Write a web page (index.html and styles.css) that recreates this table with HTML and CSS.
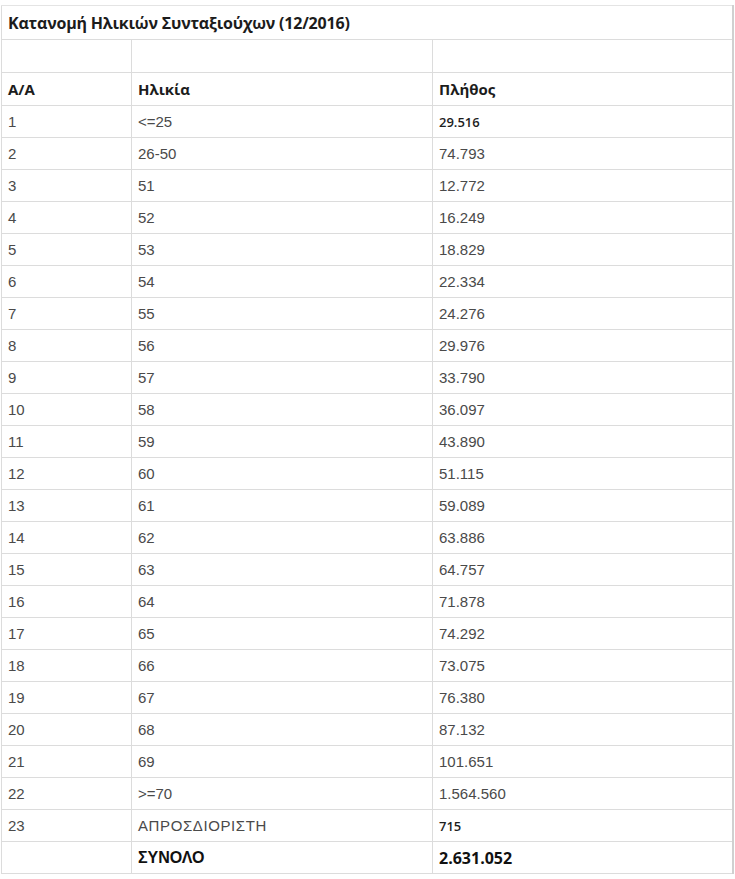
FILE: index.html
```html
<!DOCTYPE html>
<html lang="el">
<head>
<meta charset="utf-8">
<title>Κατανομή Ηλικιών Συνταξιούχων</title>
<link rel="stylesheet" href="styles.css">
</head>
<body>
<table class="grid">
  <colgroup><col class="c1"><col class="c2"><col class="c3"></colgroup>
  <tr class="title-row"><td colspan="3" class="title">Κατανομή Ηλικιών Συνταξιούχων (12/2016)</td></tr>
  <tr class="empty-row"><td></td><td></td><td></td></tr>
  <tr class="head-row"><td class="head">Α/Α</td><td class="head">Ηλικία</td><td class="head">Πλήθος</td></tr>
  <tr><td>1</td><td>&lt;=25</td><td class="cal">29.516</td></tr>
  <tr><td>2</td><td>26-50</td><td>74.793</td></tr>
  <tr><td>3</td><td>51</td><td>12.772</td></tr>
  <tr><td>4</td><td>52</td><td>16.249</td></tr>
  <tr><td>5</td><td>53</td><td>18.829</td></tr>
  <tr><td>6</td><td>54</td><td>22.334</td></tr>
  <tr><td>7</td><td>55</td><td>24.276</td></tr>
  <tr><td>8</td><td>56</td><td>29.976</td></tr>
  <tr><td>9</td><td>57</td><td>33.790</td></tr>
  <tr><td>10</td><td>58</td><td>36.097</td></tr>
  <tr><td>11</td><td>59</td><td>43.890</td></tr>
  <tr><td>12</td><td>60</td><td>51.115</td></tr>
  <tr><td>13</td><td>61</td><td>59.089</td></tr>
  <tr><td>14</td><td>62</td><td>63.886</td></tr>
  <tr><td>15</td><td>63</td><td>64.757</td></tr>
  <tr><td>16</td><td>64</td><td>71.878</td></tr>
  <tr><td>17</td><td>65</td><td>74.292</td></tr>
  <tr><td>18</td><td>66</td><td>73.075</td></tr>
  <tr><td>19</td><td>67</td><td>76.380</td></tr>
  <tr><td>20</td><td>68</td><td>87.132</td></tr>
  <tr><td>21</td><td>69</td><td>101.651</td></tr>
  <tr><td>22</td><td>&gt;=70</td><td>1.564.560</td></tr>
  <tr><td>23</td><td class="wide">ΑΠΡΟΣΔΙΟΡΙΣΤΗ</td><td class="cal">715</td></tr>
  <tr><td></td><td class="total-label">ΣΥΝΟΛΟ</td><td class="total-value">2.631.052</td></tr>
</table>
</body>
</html>
```
FILE: styles.css
```css
html, body {
  margin: 0;
  background: #ffffff;
}
body {
  padding: 5px 0 0 1px;
}
.grid {
  border-collapse: collapse;
  width: 731px;
  table-layout: fixed;
  font-family: "Liberation Sans", Arial, sans-serif;
  font-size: 15px;
  color: #4a4a4a;
  border-right: 2px solid #d0d0d0;
}
.c1 { width: 130px; }
.c2 { width: 301px; }
.c3 { width: 300px; }
.grid td {
  border: 1px solid #dcdcdc;
  height: 32px;
  padding: 0 6px;
  box-sizing: border-box;
  vertical-align: middle;
  white-space: nowrap;
}
.grid .title-row td { height: 34px; border-top-color: #e4e4e4; }
.grid .empty-row td { height: 33px; }
.grid .head-row td { height: 33px; }
.title {
  font-family: "Open Sans", "Noto Sans", sans-serif;
  font-weight: 700;
  font-size: 16px;
  letter-spacing: -0.2px;
  color: #1c1c1c;
}
.head {
  font-family: "Open Sans", "Noto Sans", sans-serif;
  font-weight: 700;
  font-size: 15px;
  color: #1c1c1c;
  padding-top: 4px;
}
.cal {
  font-family: "Open Sans", "Noto Sans", sans-serif;
  font-weight: 600;
  font-size: 13px;
  color: #1e1e1e;
}
.wide {
  letter-spacing: 0.6px;
}
.total-label {
  font-weight: 700;
  font-size: 16px;
  color: #111;
}
.total-value {
  font-family: "Open Sans", "Noto Sans", sans-serif;
  font-weight: 700;
  font-size: 16px;
  color: #111;
}
```
